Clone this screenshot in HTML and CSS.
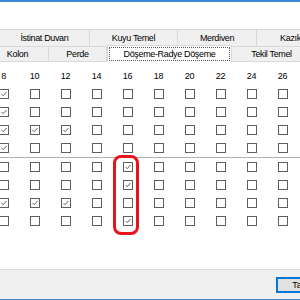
FILE: index.html
```html
<!DOCTYPE html>
<html lang="tr">
<head>
  <meta charset="UTF-8">
  <title>Donatı Seçimi</title>
  <link rel="stylesheet" href="styles.css">
</head>
<body>
  <div class="window">
    <div class="top-space"></div>

    <div class="tabs">
      <div class="tab-row back">
        <div class="tab w90">İstinat Duvarı</div>
        <div class="tab w88">Kuyu Temel</div>
        <div class="tab w79">Merdiven</div>
        <div class="tab w68">Kazık</div>
      </div>
      <div class="tab-row front">
        <div class="tab kolon">Kolon</div>
        <div class="tab w58">Perde</div>
        <div class="tab active"><span class="focus">Döşeme-Radye Döşeme</span></div>
        <div class="tab w80">Tekil Temel</div>
      </div>
    </div>

    <div class="panel">
      <div class="row head">
        <span>8</span><span>10</span><span>12</span><span>14</span><span>16</span>
        <span>18</span><span>20</span><span>22</span><span>24</span><span>26</span>
      </div>
      <div class="row" data-checked="0"></div>
      <div class="row" data-checked="0"></div>
      <div class="row" data-checked="0,1,2"></div>
      <div class="row" data-checked="0"></div>
      <div class="separator"></div>
      <div class="row" data-checked="4"></div>
      <div class="row" data-checked="4"></div>
      <div class="row" data-checked="0,1,2"></div>
      <div class="row" data-checked="4"></div>

      <div class="highlight"></div>
    </div>

    <div class="footer">
      <button class="btn">Tamam</button>
    </div>
  </div>

  <script>
    // fill each row with 10 checkboxes
    var check = '<svg width="8" height="8" viewBox="0 0 8 8"><path d="M1.5 4 L3.2 5.7 L6.5 2" fill="none" stroke="#606060" stroke-width="1"/></svg>';
    document.querySelectorAll('.row[data-checked]').forEach(function (row) {
      var on = row.dataset.checked.split(',').map(Number);
      var html = '';
      for (var i = 0; i < 10; i++) {
        html += on.indexOf(i) >= 0
          ? '<span class="cb on">' + check + '</span>'
          : '<span class="cb"></span>';
      }
      row.innerHTML = html;
    });
  </script>
</body>
</html>
```

FILE: styles.css
```css
html, body {
  margin: 0;
  padding: 0;
  overflow: hidden;
}
body {
  font-family: "Liberation Sans", Arial, sans-serif;
  font-size: 9px;
  letter-spacing: -0.35px;
  color: #000;
  background: #fff;
}
.window {
  width: 300px;
  height: 300px;
  border-top: 2px solid #3d8ad6;
  box-sizing: border-box;
  display: flex;
  flex-direction: column;
  overflow: hidden;
}
.top-space {
  height: 27px;
  flex: none;
}

/* tab strip */
.tabs {
  flex: none;
}
.tab-row {
  display: flex;
  white-space: nowrap;
}
.tab-row.back {
  height: 16px;
  background: #f0f0f0;
  border-top: 1px solid #d9d9d9;
}
.tab-row.front {
  height: 14px;
  background: #f0f0f0;
  border-top: 1px solid #d9d9d9;
  border-bottom: 1px solid #d9d9d9;
}
.tab {
  flex: none;
  display: flex;
  align-items: center;
  justify-content: center;
  border-right: 1px solid #d9d9d9;
  box-sizing: border-box;
}
.w90 { width: 90px; }
.w88 { width: 88px; }
.w79 { width: 79px; }
.w80 { width: 80px; }
.w68 { width: 68px; }
.w58 { width: 58px; }
.kolon {
  width: 62px;
  margin-left: -13px;
}
.tab.active {
  width: 125px;
  height: 17px;
  margin-top: -2px;
  background: #fff;
  border: 1px solid #d9d9d9;
  border-bottom: none;
  padding: 1px;
  position: relative;
  z-index: 1;
}
.focus {
  flex: 1;
  align-self: stretch;
  display: flex;
  align-items: center;
  justify-content: center;
  border: 1px dotted #555;
}

/* check grid */
.panel {
  flex: 1;
  position: relative;
  padding-top: 5px;
}
.row {
  display: grid;
  grid-template-columns: repeat(10, 31px);
  height: 18px;
  margin-left: -12px;
  align-items: center;
  justify-items: center;
}
.separator {
  height: 1px;
  background: #b0b0b0;
}
.cb {
  width: 10px;
  height: 10px;
  box-sizing: border-box;
  border: 1px solid #5e5e5e;
  background: #fff;
  display: flex;
  align-items: center;
  justify-content: center;
}
.highlight {
  position: absolute;
  left: 113px;
  top: 93px;
  width: 26px;
  height: 80px;
  box-sizing: border-box;
  border: 3px solid #e8141c;
  border-radius: 8px;
}

/* bottom bar */
.footer {
  flex: none;
  height: 31px;
  box-sizing: border-box;
  background: #f0f0f0;
  border-top: 1px solid #dadada;
  border-bottom: 1px solid #3d8ad6;
  display: flex;
  justify-content: flex-end;
  align-items: flex-start;
  padding-top: 7px;
}
.btn {
  width: 62px;
  height: 16px;
  margin-right: -38px;
  padding: 0;
  font: inherit;
  background: #e1e1e1;
  border: 2px solid #0078d7;
  box-sizing: border-box;
}
```
